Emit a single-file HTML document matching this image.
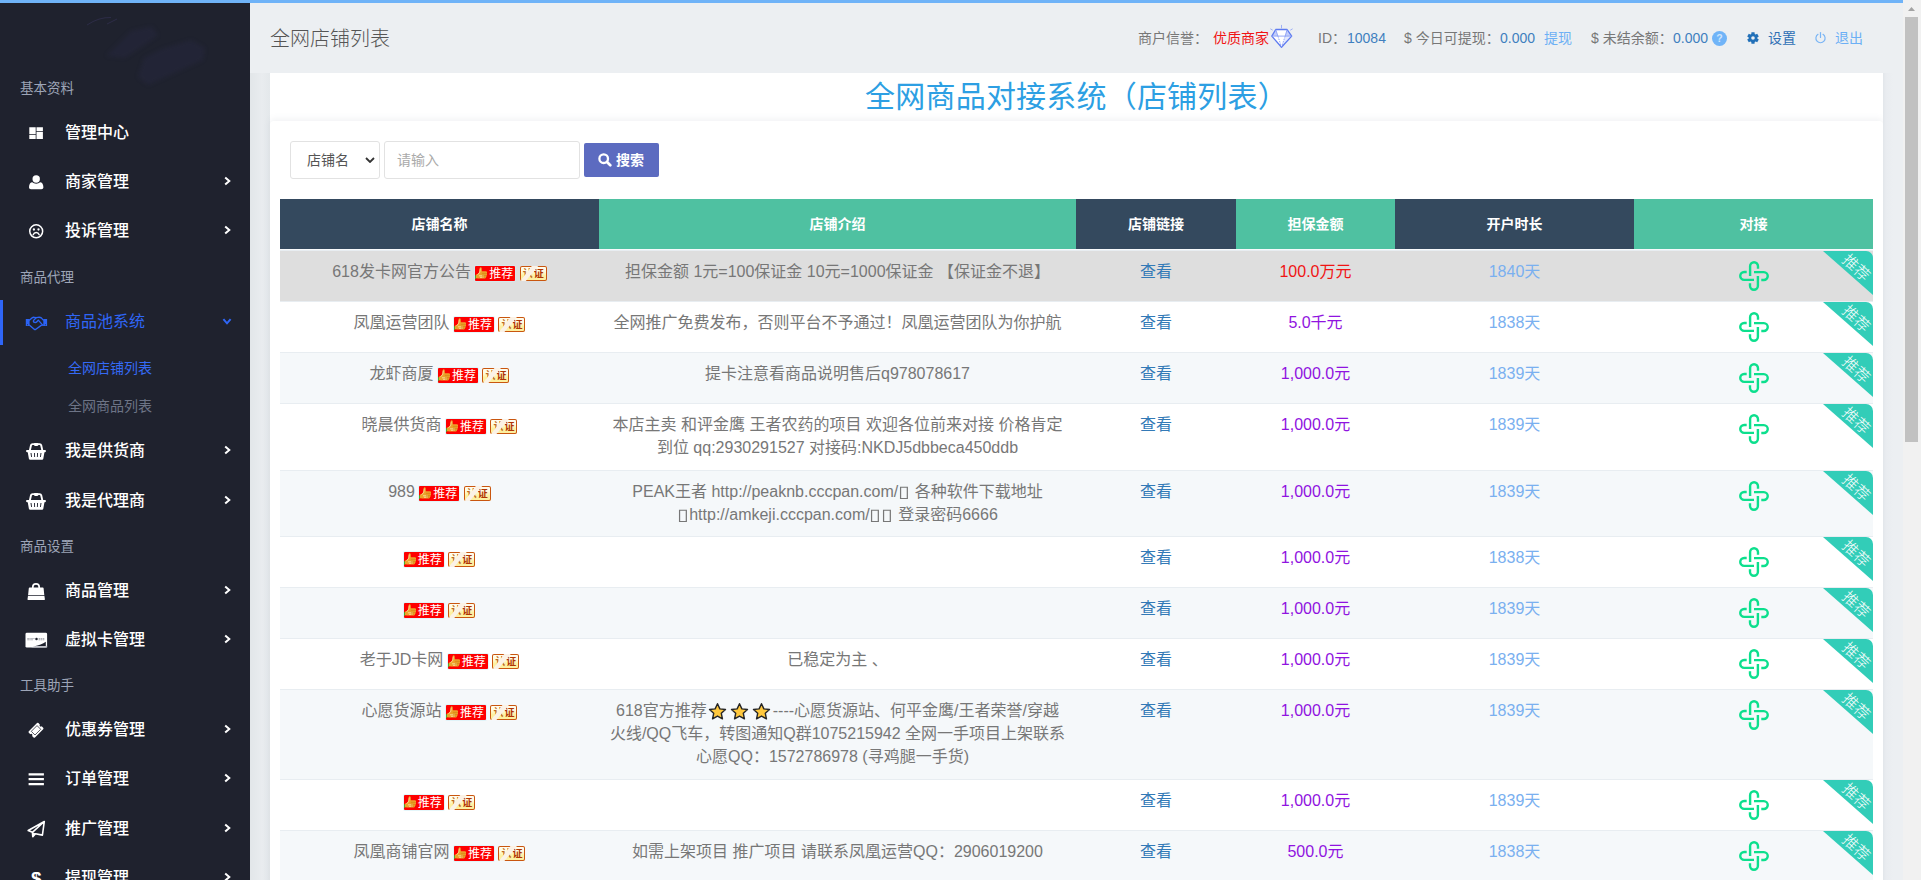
<!DOCTYPE html>
<html lang="zh-CN">
<head>
<meta charset="utf-8">
<title>全网店铺列表</title>
<style>
*{box-sizing:border-box;margin:0;padding:0}
html,body{width:1921px;height:880px;overflow:hidden}
body{font-family:"Liberation Sans","Noto Sans CJK SC",sans-serif;background:#eceff2;color:#666;position:relative;font-size:14px}
a{text-decoration:none;color:inherit}
#topline{position:absolute;left:0;top:0;width:1903px;height:3px;background:#6fb3f8;z-index:10}
#sb{position:absolute;left:1903px;top:0;width:18px;height:880px;background:#f1f1f1;z-index:20}
#sb svg{position:absolute;left:0;top:0;width:18px;height:18px}
#sb b{position:absolute;left:2px;top:17px;width:13px;height:425px;background:#c1c1c1}
/* sidebar */
#side{position:absolute;left:0;top:0;width:250px;height:880px;background:#1f222e;overflow:hidden}
#side .lbl{position:absolute;left:20px;font-size:13.500px;color:#9da5b7;line-height:20px;height:20px}
#side .it{position:absolute;left:0;width:250px;height:46px;color:#fff;font-size:16px;font-weight:500;line-height:46px}
#side .it .tx{position:absolute;left:65px;top:1px}
#side .it svg.ic{position:absolute;left:24px;top:11px;width:24px;height:24px;fill:currentColor;color:#fff}
#side .it svg.ch{position:absolute;left:222px;top:17px;width:10px;height:12px;fill:none;stroke:#fff;stroke-width:2}
#side .it svg.ch.dn{left:221px;top:18px;width:12px;height:10px}
#side .it.act{color:#2f66f6;font-weight:400}
#side .it.act svg.ic{color:#2b63f5}
#side .it.act svg.ch{stroke:#2f66f6}
#side .bar{position:absolute;left:0;top:300px;width:3px;height:45px;background:#2f66f8}
#side .sub{position:absolute;left:68px;font-size:14px;line-height:20px;color:#6d7486}
#side .sub.on{color:#356af5}
#smg{position:absolute;left:0;top:0;width:250px;height:100px}
/* header */
#hd{position:absolute;left:250px;top:3px;width:1653px;height:70px}
#hd h1{position:absolute;left:20px;top:21px;font-size:20px;font-weight:300;color:#555;line-height:30px}
#hd .r{position:absolute;top:25px;font-size:14px;line-height:20px;color:#777;white-space:nowrap}
#hd .b{color:#3f7fbf}
#hd .lb{color:#6cb0f5}
/* cards */
#wrap{position:absolute;left:250px;top:73px;width:1653px;height:807px;overflow:hidden}
#c1{position:absolute;left:20px;top:0;width:1613px;height:52px;background:#fff;}
#wrap:before{content:"";position:absolute;left:0;top:0;width:20px;height:807px;background:linear-gradient(to right,#e2e6e9 0,#e9ecef 60%,#e4e8eb 100%)}
#wrap:after{content:"";position:absolute;left:1633px;top:0;width:20px;height:807px;background:linear-gradient(to right,#e2e6ea 0,#e9ecf0 3px,#eceff2 10px)}
#c1 h2{font-size:30px;font-weight:400;color:#2d9fe3;text-align:center;line-height:48px;letter-spacing:.2px}
#c2{position:absolute;left:20px;top:48px;width:1613px;height:770px;background:#fff;border-radius:4px 4px 0 0;box-shadow:0 -2px 6px rgba(120,130,145,.10)}
#sel{position:absolute;left:20px;top:20px;width:90px;height:38px;border:1px solid #e2e2e2;border-radius:3px;background:#fff;font-size:14px;color:#555;line-height:36px;padding-left:16px}
#inp{position:absolute;left:114px;top:20px;width:196px;height:38px;border:1px solid #e2e2e2;border-radius:3px;background:#fff;font-size:14px;color:#aaa;line-height:36px;padding-left:12px}
#btn{position:absolute;left:314px;top:22px;width:75px;height:34px;border-radius:2px;background:#5c6bc0;color:#fff;font-size:14px;font-weight:700;line-height:34px;padding-left:32px}
/* table */
#tb{position:absolute;left:10px;top:78px;width:1593px;border-collapse:separate;border-spacing:0;table-layout:fixed}
#tb th{height:50px;color:#fff;font-size:14px;font-weight:700;text-align:center;vertical-align:middle;padding-bottom:1px;line-height:20px}
#tb th.d{background:#34495e}
#tb th.g{background:#4fc1a1}
#tb td{text-align:center;vertical-align:top;font-size:16px;line-height:22.860px;color:#777;padding:10px 10px 0;border-top:1px solid #e8edf1;position:relative}
#tb tr.o td{background:#f5f8fa}
#tb tr.h td{background:#dedede}
#tb tr.sp td{height:1px;padding:0;border:0;background:#f8fafc}
.lk{color:#337ab7}
#tb td.red{color:#f01414}
#tb td.pu{color:#9013e0}
#tb td.dy{color:#7ab0f0}

#btn svg{position:absolute;left:14px;top:10px;width:14px;height:14px}
#selarr{position:absolute;left:95px;top:36px;width:10px;height:6px}
.tj{display:inline-block;width:40px;height:15px;background:#fe0000;color:#fff;font-size:12px;line-height:15px;vertical-align:-4px;text-align:left;position:relative;border-radius:1px;overflow:hidden;white-space:nowrap;box-shadow:0 0 0 1px rgba(205,238,245,.55)}
.tj svg{position:absolute;left:0;top:0;width:13px;height:15px}
.rz{display:inline-block;width:27px;height:15px;background:linear-gradient(#fffdf2 0,#fffbe0 35%,#fdf0a0 65%);color:#b03404;font-size:10px;font-weight:700;line-height:15px;vertical-align:-4px;box-shadow:inset 0 0 0 1px #c9560f;border-radius:2px;position:relative;overflow:hidden;white-space:nowrap;text-align:left}
.rz i{position:absolute;left:0;top:0;width:27px;height:15px;background:#fbf2e6;clip-path:polygon(12px 0,18.500px 0,6px 15px,.5px 15px);z-index:1}
.tj em{position:absolute;left:14px;top:1px;font-style:normal;font-size:12px;line-height:15px;font-weight:400}
.rz em{position:absolute;left:3px;top:1px;font-style:normal;line-height:13px;letter-spacing:1px}
.rz b{font-weight:700;color:#c06a20}
.dj{position:absolute;left:105px;top:10px;width:30px;height:30px}
.rib{position:absolute;right:0;top:0;width:50px;height:44px;overflow:hidden;border-top-right-radius:7px}
.rib:before{content:"";position:absolute;left:0;top:0;width:50px;height:44px;background:#32cdb8;clip-path:polygon(0 0,100% 0,100% 100%)}
.rib span{position:absolute;left:12.500px;top:6.500px;width:40px;height:20px;font-size:15.500px;line-height:20px;color:#fff;transform:rotate(43.500deg);transform-origin:50% 50%;white-space:nowrap;font-weight:300;text-align:center}
.st{width:19px;height:19px;vertical-align:-4.500px;margin:0 1.500px}
.tf{display:inline-block;transform:scaleX(1.350);margin:0 1.500px}
</style>
</head>
<body>
<div id="topline"></div>
<div id="sb"><svg viewBox="0 0 18 18"><path d="M5 11l3.500-4 3.500 4z" fill="#a3a3a3"/></svg><b></b></div>
<div id="side">
<svg id="smg" viewBox="0 0 250 100"><defs><filter id="bl" x="-20%" y="-20%" width="140%" height="140%"><feGaussianBlur stdDeviation="2.200"/></filter></defs><g filter="url(#bl)" fill="#2b2a48" opacity=".32"><path d="M131 31l21-4.500 6 9-33 22.500-19-2z"/><path d="M162 49l29-9 14 8-2 12-55 25-10-8 6-19z"/></g><path d="M87 25q12-8 24-7.500M107 24l10-5" stroke="#3a3560" stroke-width="1" fill="none" opacity=".5"/></svg>
<div class="bar"></div>
<div class="lbl" style="top:79px">基本资料</div>
<div class="it" style="top:109px"><svg class="ic" viewBox="0 0 24 24"><path d="M5.300 7.200h6.400V14H5.300zM5.300 14.800h6.400v4.300H5.300zM12.500 7.200h6.400v3.700h-6.400zM12.500 11.700h6.400v7.400h-6.400z"/></svg><span class="tx">管理中心</span></div>
<div class="it" style="top:158px"><svg class="ic" viewBox="0 0 24 24"><circle cx="12.200" cy="10" r="3.700"/><path d="M5 18.300c0-3.200 1.500-4.900 3.300-5 1 .9 2.300 1.400 3.900 1.400s2.900-.5 3.900-1.400c1.800.1 3.300 1.800 3.300 5 0 1.200-.8 2-2 2H7c-1.200 0-2-.8-2-2z"/></svg><span class="tx">商家管理</span><svg class="ch" viewBox="0 0 10 12"><path d="M3.200 2.400L7.300 6 3.200 9.600"/></svg></div>
<div class="it" style="top:207px"><svg class="ic" viewBox="0 0 24 24"><circle cx="12.200" cy="13.300" r="6.450" fill="none" stroke="currentColor" stroke-width="1.500"/><circle cx="9.900" cy="11.500" r="1.150"/><circle cx="14.500" cy="11.500" r="1.150"/><path d="M9.200 16.800c.5-1.500 1.600-2.300 3-2.300s2.500.8 3 2.300" fill="none" stroke="currentColor" stroke-width="1.400" stroke-linecap="round"/></svg><span class="tx">投诉管理</span><svg class="ch" viewBox="0 0 10 12"><path d="M3.200 2.400L7.300 6 3.200 9.600"/></svg></div>
<div class="lbl" style="top:268px">商品代理</div>
<div class="it act" style="top:298px"><svg class="ic" viewBox="0 0 24 24"><path d="M1.800 10h3.800v7H1.800zM19.300 10h3.800v7h-3.800z"/><g fill="none" stroke="currentColor" stroke-width="1.350" stroke-linejoin="round" stroke-linecap="round"><path d="M5.600 11.100L8 8.900q1-.7 2.200-.6l1.900.4 2-.4q2-.3 3.200.6l2 2.200"/><path d="M5.600 16.200l4.600 4q.8.700 1.700 0l5.300-3.800 2.100-.2"/><path d="M12.100 8.700l-2.500 2.700q-.7 1.500 1 2 1.400.3 2.300-.7l1.400-1.600 4 4.500"/></g><circle cx="3.500" cy="15.700" r=".5" fill="#1f222e"/><circle cx="21.400" cy="15.700" r=".5" fill="#1f222e"/></svg><span class="tx">商品池系统</span><svg class="ch dn" viewBox="0 0 12 10"><path d="M2.400 3.200L6 7.300 9.600 3.200"/></svg></div>
<div class="sub on" style="top:358px">全网店铺列表</div>
<div class="sub" style="top:396px">全网商品列表</div>
<div class="it" style="top:427px"><svg class="ic" viewBox="0 0 24 24"><path d="M5.900 12.300L7 7.200q.3-1.100 1.500-1.100h7.200q1.200 0 1.500 1.100l1.100 5.100" fill="none" stroke="currentColor" stroke-width="1.900"/><rect x="9.800" y="5" width="4.700" height="2.900" rx="1.300"/><rect x="2" y="11.900" width="20" height="2.300" rx="1.100"/><path d="M3.700 14h16.800l-1.200 6.700q-.2 1-1.200 1H6.100q-1 0-1.200-1zM6.500 14.900l.6 4h.9l-.5-4zM10 14.900l.2 4h.9l-.2-4zM13.100 14.900l-.2 4h.9l.2-4zM16.500 14.900l-.5 4h.9l.6-4z" fill-rule="evenodd"/></svg><span class="tx">我是供货商</span><svg class="ch" viewBox="0 0 10 12"><path d="M3.200 2.400L7.300 6 3.200 9.600"/></svg></div>
<div class="it" style="top:477px"><svg class="ic" viewBox="0 0 24 24"><path d="M5.900 12.300L7 7.200q.3-1.100 1.500-1.100h7.200q1.200 0 1.500 1.100l1.100 5.100" fill="none" stroke="currentColor" stroke-width="1.900"/><rect x="9.800" y="5" width="4.700" height="2.900" rx="1.300"/><rect x="2" y="11.900" width="20" height="2.300" rx="1.100"/><path d="M3.700 14h16.800l-1.200 6.700q-.2 1-1.200 1H6.100q-1 0-1.200-1zM6.500 14.900l.6 4h.9l-.5-4zM10 14.900l.2 4h.9l-.2-4zM13.100 14.900l-.2 4h.9l.2-4zM16.500 14.900l-.5 4h.9l.6-4z" fill-rule="evenodd"/></svg><span class="tx">我是代理商</span><svg class="ch" viewBox="0 0 10 12"><path d="M3.200 2.400L7.300 6 3.200 9.600"/></svg></div>
<div class="lbl" style="top:537px">商品设置</div>
<div class="it" style="top:567px"><svg class="ic" viewBox="0 0 24 24"><path d="M8.800 11.500V9a3.200 3.200 0 0 1 6.400 0v2.500" fill="none" stroke="currentColor" stroke-width="1.700"/><path d="M5.600 9.500h13.200q.7 0 .8.700l.7 6.700H4.100l.7-6.700q.1-.7.800-.7zM4 17.800h16.400l.5 3.500q.1.700-.6.700H4.100q-.7 0-.6-.7z"/></svg><span class="tx">商品管理</span><svg class="ch" viewBox="0 0 10 12"><path d="M3.200 2.400L7.300 6 3.200 9.600"/></svg></div>
<div class="it" style="top:616px"><svg class="ic" viewBox="0 0 24 24"><rect x="1.500" y="5.700" width="21.600" height="14.900" rx="1.400"/><path d="M7 20.600h16.100v-1.800H12z" fill="#c4c6cd"/><path d="M10 19.500c5-1 8.800-2.600 11.800-4.700v4.100H12z" fill="#1f222e"/><path d="M3.300 11.600h1.600M5.400 11.600h1.300M7.200 11.600h1.600M9.300 11.600h1.300M14.600 11.600h1.500M16.600 11.600h1.500M18.600 11.600h1.700M3.300 12.800h1.600M5.400 12.800h1.300M7.200 12.800h1.600M14.600 12.800h1.500M16.600 12.800h1.500M18.600 12.800h1.700" stroke="#8d8f98" stroke-width=".8" fill="none"/><circle cx="12.500" cy="12.100" r="1.250" fill="#1f222e"/></svg><span class="tx">虚拟卡管理</span><svg class="ch" viewBox="0 0 10 12"><path d="M3.200 2.400L7.300 6 3.200 9.600"/></svg></div>
<div class="lbl" style="top:676px">工具助手</div>
<div class="it" style="top:706px"><svg class="ic" viewBox="0 0 24 24"><g transform="translate(12 13.300) rotate(-45)"><path d="M-6.800-3.350a1 1 0 0 1 1-1H5.800a1 1 0 0 1 1 1V-1.200a1.200 1.200 0 0 0 0 2.400V3.350a1 1 0 0 1-1 1H-5.800a1 1 0 0 1-1-1V1.200a1.200 1.200 0 0 0 0-2.400z"/><rect x="-4.050" y="-2.600" width="8.100" height="5.200" fill="none" stroke="#1f222e" stroke-width=".7"/></g></svg><span class="tx">优惠券管理</span><svg class="ch" viewBox="0 0 10 12"><path d="M3.200 2.400L7.300 6 3.200 9.600"/></svg></div>
<div class="it" style="top:755px"><svg class="ic" viewBox="0 0 24 24"><path d="M4.600 7.200h15.300v2.200H4.600zM4.600 12h15.300v2.200H4.600zM4.600 16.900h15.300v2.300H4.600z"/></svg><span class="tx">订单管理</span><svg class="ch" viewBox="0 0 10 12"><path d="M3.200 2.400L7.300 6 3.200 9.600"/></svg></div>
<div class="it" style="top:805px"><svg class="ic" viewBox="0 0 24 24"><path d="M20.300 5.500L4.200 14.500l4.200 1.800.4 4.400 2.700-3 6.900 1.400zM20.300 5.500L8.400 16.300" fill="none" stroke="currentColor" stroke-width="1.600" stroke-linejoin="round"/><path d="M8.400 16.300l.4 4.400 2.900-3.200z"/></svg><span class="tx">推广管理</span><svg class="ch" viewBox="0 0 10 12"><path d="M3.200 2.400L7.300 6 3.200 9.600"/></svg></div>
<div class="it" style="top:854px"><svg class="ic" viewBox="0 0 24 24"><text x="12.200" y="19.500" font-size="19" font-weight="700" text-anchor="middle" font-family="Liberation Sans,sans-serif">$</text></svg><span class="tx">提现管理</span><svg class="ch" viewBox="0 0 10 12"><path d="M3.200 2.400L7.300 6 3.200 9.600"/></svg></div>
</div>
<div id="hd"><h1>全网店铺列表</h1>
<span class="r" style="left:888px">商户信誉：</span>
<span class="r" style="left:963px;color:#f01414">优质商家</span>
<svg style="position:absolute;left:1020px;top:21px;width:23px;height:24px" viewBox="0 0 23 24" fill="none" stroke="#5d7af0" stroke-linejoin="round"><path d="M11.500 1.300v2.600M.7 5l1.700 1M22.300 5l-1.700 1" stroke="#9fb0f6" stroke-width="1" stroke-linecap="round"/><path d="M5.700 5.500h11.400l4.600 6.600L11.500 23.200 1.800 12.100z" fill="#fff" stroke="none"/><path d="M1.800 12.100l3.900-6.600 2.200 6.600zM21.700 12.100l-4.600-6.600-1.900 6.600z" fill="#c3cefa" stroke="none"/><path d="M15.200 12.100h6.500L11.500 23.200z" fill="#e4e9fd" stroke="none"/><path d="M5.700 5.500h11.400l4.600 6.600L11.500 23.200 1.800 12.100z" stroke-width="1.300"/><path d="M1.800 12.100h19.900M5.700 5.500l2.200 6.600M17.100 5.500l-1.900 6.600" stroke-width=".9" stroke="#8a9ff5"/><path d="M7.900 12.100l3.600 11M15.200 12.100l-3.700 11" stroke-width=".9" stroke="#8a9ff5" stroke-dasharray="1.600 1"/></svg>
<span class="r" style="left:1068px">ID：</span>
<span class="r b" style="left:1097px">10084</span>
<span class="r" style="left:1154px">$ 今日可提现：</span>
<span class="r b" style="left:1250px">0.000</span>
<span class="r lb" style="left:1294px">提现</span>
<span class="r" style="left:1341px">$ 未结余额：</span>
<span class="r b" style="left:1423px">0.000</span>
<svg style="position:absolute;left:1462px;top:28px;width:15px;height:15px" viewBox="0 0 15 15"><circle cx="7.500" cy="7.500" r="7.500" fill="#70b4f8"/><text x="7.500" y="11.300" font-size="10.500" font-weight="700" text-anchor="middle" fill="#cfe5fc" font-family="Liberation Sans,sans-serif">?</text></svg>
<svg style="position:absolute;left:1497px;top:29px;width:12px;height:12px" viewBox="0 0 12 12"><path fill="#2270b8" fill-rule="evenodd" d="M4.29 2.05 L4.45 0.20 L7.55 0.20 L7.71 2.05 L8.56 2.55 L10.24 1.76 L11.80 4.45 L10.27 5.51 L10.27 6.49 L11.80 7.55 L10.24 10.24 L8.56 9.45 L7.71 9.95 L7.55 11.80 L4.45 11.80 L4.29 9.95 L3.44 9.45 L1.76 10.24 L0.20 7.55 L1.73 6.49 L1.73 5.51 L0.20 4.45 L1.76 1.76 L3.44 2.55Z M6 4.200a1.800 1.800 0 1 0 0 3.600a1.800 1.800 0 1 0 0-3.600z"/></svg>
<span class="r" style="left:1518px;color:#2f6fb5">设置</span>
<svg style="position:absolute;left:1564px;top:28px;width:13px;height:14px" viewBox="0 0 13 14" fill="none" stroke="#7ab5f5" stroke-width="1.200" stroke-linecap="round"><path d="M6.500 1.500v5"/><path d="M4 3.300a4.600 4.600 0 1 0 5 0"/></svg>
<span class="r lb" style="left:1585px">退出</span>
</div>
<div id="wrap">
<div id="c1"><h2>全网商品对接系统（店铺列表）</h2></div>
<div id="c2">
<div id="sel">店铺名</div>
<div id="inp">请输入</div>
<div id="btn"><svg viewBox="0 0 14 14"><circle cx="5.700" cy="5.700" r="4.300" fill="none" stroke="#fff" stroke-width="2.300"/><path d="M9 9l3.300 3.300" stroke="#fff" stroke-width="2.700" stroke-linecap="round"/></svg>搜索</div>
<svg id="selarr" viewBox="0 0 10 6"><path d="M1 1l4 4 4-4" fill="none" stroke="#333" stroke-width="1.800"/></svg>
<table id="tb"><colgroup><col style="width:319px"><col style="width:477px"><col style="width:160px"><col style="width:159px"><col style="width:239px"><col style="width:239px"></colgroup>
<tr><th class="d">店铺名称</th><th class="g">店铺介绍</th><th class="d">店铺链接</th><th class="g">担保金额</th><th class="d">开户时长</th><th class="g">对接</th></tr>
<tr class="sp"><td colspan="6"></td></tr>
<tr class="h" style="height:51px"><td>618发卡网官方公告 <span class="tj"><svg viewBox="0 0 13 15"><path d="M0 9.200h1.100v3.600H0z" fill="#46b02a"/><path d="M1 8.600c1.500-.2 2.500-1 3.200-2.500l.5-3.800c.1-1.200 1.800-1.300 2-.1l.2 3.100h3.900c1.400 0 1.600 1.500.8 2 .7.500.6 1.700-.2 2 .5.600.2 1.600-.5 1.800.3.700-.2 1.500-1.100 1.500H4.500c-1.200 0-2-.4-3.500-.4z" fill="#eda22a"/><path d="M5.300 2.600l-.5 3.600c-.4 1-1.200 1.800-2.300 2.300M4 9.800h5M5 11.300h4" fill="none" stroke="#fbe6a8" stroke-width=".8"/><path d="M6.900 7.300h4.300M7 9.300h4M7 11.100h3.500" fill="none" stroke="#c9780c" stroke-width=".6"/></svg><em>推荐</em></span> <span class="rz"><i></i><em><b>认</b>证</em></span></td><td>担保金额 1元=100保证金 10元=1000保证金 【保证金不退】</td><td><a class="lk">查看</a></td><td class="red">100.0万元</td><td class="dy">1840天</td><td><svg class="dj" viewBox="0 0 30 30"><g fill="none" stroke="#0cdf8d" stroke-width="2.400"><path d="M11.100 15V5.200a3.950 3.950 0 0 1 7.900 0v2.500"/><path d="M15 11.100h9.800a3.950 3.950 0 0 1 0 7.900h-2.500"/><path d="M18.900 15v9.800a3.950 3.950 0 0 1-7.900 0v-2.500"/><path d="M15 18.900H5.200a3.950 3.950 0 0 1 0-7.900h2.500"/></g></svg><div class="rib"><span>推荐</span></div></td></tr>
<tr class="" style="height:51px"><td>凤凰运营团队 <span class="tj"><svg viewBox="0 0 13 15"><path d="M0 9.200h1.100v3.600H0z" fill="#46b02a"/><path d="M1 8.600c1.500-.2 2.500-1 3.200-2.500l.5-3.800c.1-1.200 1.800-1.300 2-.1l.2 3.100h3.900c1.400 0 1.600 1.500.8 2 .7.500.6 1.700-.2 2 .5.600.2 1.600-.5 1.800.3.700-.2 1.500-1.100 1.500H4.500c-1.200 0-2-.4-3.500-.4z" fill="#eda22a"/><path d="M5.300 2.600l-.5 3.600c-.4 1-1.200 1.800-2.300 2.300M4 9.800h5M5 11.300h4" fill="none" stroke="#fbe6a8" stroke-width=".8"/><path d="M6.900 7.300h4.300M7 9.300h4M7 11.100h3.500" fill="none" stroke="#c9780c" stroke-width=".6"/></svg><em>推荐</em></span> <span class="rz"><i></i><em><b>认</b>证</em></span></td><td>全网推广免费发布，否则平台不予通过！凤凰运营团队为你护航</td><td><a class="lk">查看</a></td><td class="pu">5.0千元</td><td class="dy">1838天</td><td><svg class="dj" viewBox="0 0 30 30"><g fill="none" stroke="#0cdf8d" stroke-width="2.400"><path d="M11.100 15V5.200a3.950 3.950 0 0 1 7.900 0v2.500"/><path d="M15 11.100h9.800a3.950 3.950 0 0 1 0 7.900h-2.500"/><path d="M18.900 15v9.800a3.950 3.950 0 0 1-7.900 0v-2.500"/><path d="M15 18.900H5.200a3.950 3.950 0 0 1 0-7.900h2.500"/></g></svg><div class="rib"><span>推荐</span></div></td></tr>
<tr class="o" style="height:51px"><td>龙虾商厦 <span class="tj"><svg viewBox="0 0 13 15"><path d="M0 9.200h1.100v3.600H0z" fill="#46b02a"/><path d="M1 8.600c1.500-.2 2.500-1 3.200-2.500l.5-3.800c.1-1.200 1.800-1.300 2-.1l.2 3.100h3.900c1.400 0 1.600 1.500.8 2 .7.500.6 1.700-.2 2 .5.600.2 1.600-.5 1.800.3.700-.2 1.500-1.100 1.500H4.500c-1.200 0-2-.4-3.500-.4z" fill="#eda22a"/><path d="M5.300 2.600l-.5 3.600c-.4 1-1.200 1.800-2.300 2.300M4 9.800h5M5 11.300h4" fill="none" stroke="#fbe6a8" stroke-width=".8"/><path d="M6.900 7.300h4.300M7 9.300h4M7 11.100h3.500" fill="none" stroke="#c9780c" stroke-width=".6"/></svg><em>推荐</em></span> <span class="rz"><i></i><em><b>认</b>证</em></span></td><td>提卡注意看商品说明售后q978078617</td><td><a class="lk">查看</a></td><td class="pu">1,000.0元</td><td class="dy">1839天</td><td><svg class="dj" viewBox="0 0 30 30"><g fill="none" stroke="#0cdf8d" stroke-width="2.400"><path d="M11.100 15V5.200a3.950 3.950 0 0 1 7.900 0v2.500"/><path d="M15 11.100h9.800a3.950 3.950 0 0 1 0 7.900h-2.500"/><path d="M18.900 15v9.800a3.950 3.950 0 0 1-7.900 0v-2.500"/><path d="M15 18.900H5.200a3.950 3.950 0 0 1 0-7.900h2.500"/></g></svg><div class="rib"><span>推荐</span></div></td></tr>
<tr class="" style="height:67px"><td>晓晨供货商 <span class="tj"><svg viewBox="0 0 13 15"><path d="M0 9.200h1.100v3.600H0z" fill="#46b02a"/><path d="M1 8.600c1.500-.2 2.500-1 3.200-2.500l.5-3.800c.1-1.200 1.800-1.300 2-.1l.2 3.100h3.900c1.400 0 1.600 1.500.8 2 .7.500.6 1.700-.2 2 .5.600.2 1.600-.5 1.800.3.700-.2 1.500-1.100 1.500H4.500c-1.200 0-2-.4-3.500-.4z" fill="#eda22a"/><path d="M5.300 2.600l-.5 3.600c-.4 1-1.200 1.800-2.300 2.300M4 9.800h5M5 11.300h4" fill="none" stroke="#fbe6a8" stroke-width=".8"/><path d="M6.900 7.300h4.300M7 9.300h4M7 11.100h3.500" fill="none" stroke="#c9780c" stroke-width=".6"/></svg><em>推荐</em></span> <span class="rz"><i></i><em><b>认</b>证</em></span></td><td>本店主卖 和评金鹰 王者农药的项目 欢迎各位前来对接 价格肯定<br>到位 qq:2930291527 对接码:NKDJ5dbbeca450ddb</td><td><a class="lk">查看</a></td><td class="pu">1,000.0元</td><td class="dy">1839天</td><td><svg class="dj" viewBox="0 0 30 30"><g fill="none" stroke="#0cdf8d" stroke-width="2.400"><path d="M11.100 15V5.200a3.950 3.950 0 0 1 7.900 0v2.500"/><path d="M15 11.100h9.800a3.950 3.950 0 0 1 0 7.900h-2.500"/><path d="M18.900 15v9.800a3.950 3.950 0 0 1-7.900 0v-2.500"/><path d="M15 18.900H5.200a3.950 3.950 0 0 1 0-7.900h2.500"/></g></svg><div class="rib"><span>推荐</span></div></td></tr>
<tr class="o" style="height:66px"><td>989 <span class="tj"><svg viewBox="0 0 13 15"><path d="M0 9.200h1.100v3.600H0z" fill="#46b02a"/><path d="M1 8.600c1.500-.2 2.500-1 3.200-2.500l.5-3.800c.1-1.200 1.800-1.300 2-.1l.2 3.100h3.900c1.400 0 1.600 1.500.8 2 .7.500.6 1.700-.2 2 .5.600.2 1.600-.5 1.800.3.700-.2 1.500-1.100 1.500H4.500c-1.200 0-2-.4-3.500-.4z" fill="#eda22a"/><path d="M5.300 2.600l-.5 3.600c-.4 1-1.200 1.800-2.300 2.300M4 9.800h5M5 11.300h4" fill="none" stroke="#fbe6a8" stroke-width=".8"/><path d="M6.900 7.300h4.300M7 9.300h4M7 11.100h3.500" fill="none" stroke="#c9780c" stroke-width=".6"/></svg><em>推荐</em></span> <span class="rz"><i></i><em><b>认</b>证</em></span></td><td>PEAK王者 http://peaknb.cccpan.com/<span class="tf">▯</span> 各种软件下载地址<br><span class="tf">▯</span>http://amkeji.cccpan.com/<span class="tf">▯</span><span class="tf">▯</span> 登录密码6666</td><td><a class="lk">查看</a></td><td class="pu">1,000.0元</td><td class="dy">1839天</td><td><svg class="dj" viewBox="0 0 30 30"><g fill="none" stroke="#0cdf8d" stroke-width="2.400"><path d="M11.100 15V5.200a3.950 3.950 0 0 1 7.900 0v2.500"/><path d="M15 11.100h9.800a3.950 3.950 0 0 1 0 7.900h-2.500"/><path d="M18.900 15v9.800a3.950 3.950 0 0 1-7.900 0v-2.500"/><path d="M15 18.900H5.200a3.950 3.950 0 0 1 0-7.900h2.500"/></g></svg><div class="rib"><span>推荐</span></div></td></tr>
<tr class="" style="height:51px"><td><span class="tj"><svg viewBox="0 0 13 15"><path d="M0 9.200h1.100v3.600H0z" fill="#46b02a"/><path d="M1 8.600c1.500-.2 2.500-1 3.200-2.500l.5-3.800c.1-1.200 1.800-1.300 2-.1l.2 3.100h3.900c1.400 0 1.600 1.500.8 2 .7.500.6 1.700-.2 2 .5.600.2 1.600-.5 1.800.3.700-.2 1.500-1.100 1.500H4.500c-1.200 0-2-.4-3.500-.4z" fill="#eda22a"/><path d="M5.300 2.600l-.5 3.600c-.4 1-1.200 1.800-2.300 2.300M4 9.800h5M5 11.300h4" fill="none" stroke="#fbe6a8" stroke-width=".8"/><path d="M6.900 7.300h4.300M7 9.300h4M7 11.100h3.500" fill="none" stroke="#c9780c" stroke-width=".6"/></svg><em>推荐</em></span> <span class="rz"><i></i><em><b>认</b>证</em></span></td><td></td><td><a class="lk">查看</a></td><td class="pu">1,000.0元</td><td class="dy">1838天</td><td><svg class="dj" viewBox="0 0 30 30"><g fill="none" stroke="#0cdf8d" stroke-width="2.400"><path d="M11.100 15V5.200a3.950 3.950 0 0 1 7.900 0v2.500"/><path d="M15 11.100h9.800a3.950 3.950 0 0 1 0 7.900h-2.500"/><path d="M18.900 15v9.800a3.950 3.950 0 0 1-7.900 0v-2.500"/><path d="M15 18.900H5.200a3.950 3.950 0 0 1 0-7.900h2.500"/></g></svg><div class="rib"><span>推荐</span></div></td></tr>
<tr class="o" style="height:51px"><td><span class="tj"><svg viewBox="0 0 13 15"><path d="M0 9.200h1.100v3.600H0z" fill="#46b02a"/><path d="M1 8.600c1.500-.2 2.500-1 3.200-2.500l.5-3.800c.1-1.200 1.800-1.300 2-.1l.2 3.100h3.900c1.400 0 1.600 1.500.8 2 .7.500.6 1.700-.2 2 .5.600.2 1.600-.5 1.800.3.700-.2 1.500-1.100 1.500H4.500c-1.200 0-2-.4-3.500-.4z" fill="#eda22a"/><path d="M5.300 2.600l-.5 3.600c-.4 1-1.200 1.800-2.300 2.300M4 9.800h5M5 11.300h4" fill="none" stroke="#fbe6a8" stroke-width=".8"/><path d="M6.900 7.300h4.300M7 9.300h4M7 11.100h3.500" fill="none" stroke="#c9780c" stroke-width=".6"/></svg><em>推荐</em></span> <span class="rz"><i></i><em><b>认</b>证</em></span></td><td></td><td><a class="lk">查看</a></td><td class="pu">1,000.0元</td><td class="dy">1839天</td><td><svg class="dj" viewBox="0 0 30 30"><g fill="none" stroke="#0cdf8d" stroke-width="2.400"><path d="M11.100 15V5.200a3.950 3.950 0 0 1 7.900 0v2.500"/><path d="M15 11.100h9.800a3.950 3.950 0 0 1 0 7.900h-2.500"/><path d="M18.900 15v9.800a3.950 3.950 0 0 1-7.900 0v-2.500"/><path d="M15 18.900H5.200a3.950 3.950 0 0 1 0-7.900h2.500"/></g></svg><div class="rib"><span>推荐</span></div></td></tr>
<tr class="" style="height:51px"><td>老于JD卡网 <span class="tj"><svg viewBox="0 0 13 15"><path d="M0 9.200h1.100v3.600H0z" fill="#46b02a"/><path d="M1 8.600c1.500-.2 2.500-1 3.200-2.500l.5-3.800c.1-1.200 1.800-1.300 2-.1l.2 3.100h3.900c1.400 0 1.600 1.500.8 2 .7.500.6 1.700-.2 2 .5.600.2 1.600-.5 1.800.3.700-.2 1.500-1.100 1.500H4.500c-1.200 0-2-.4-3.500-.4z" fill="#eda22a"/><path d="M5.300 2.600l-.5 3.600c-.4 1-1.200 1.800-2.300 2.300M4 9.800h5M5 11.300h4" fill="none" stroke="#fbe6a8" stroke-width=".8"/><path d="M6.900 7.300h4.300M7 9.300h4M7 11.100h3.500" fill="none" stroke="#c9780c" stroke-width=".6"/></svg><em>推荐</em></span> <span class="rz"><i></i><em><b>认</b>证</em></span></td><td>已稳定为主 、</td><td><a class="lk">查看</a></td><td class="pu">1,000.0元</td><td class="dy">1839天</td><td><svg class="dj" viewBox="0 0 30 30"><g fill="none" stroke="#0cdf8d" stroke-width="2.400"><path d="M11.100 15V5.200a3.950 3.950 0 0 1 7.900 0v2.500"/><path d="M15 11.100h9.800a3.950 3.950 0 0 1 0 7.900h-2.500"/><path d="M18.900 15v9.800a3.950 3.950 0 0 1-7.900 0v-2.500"/><path d="M15 18.900H5.200a3.950 3.950 0 0 1 0-7.900h2.500"/></g></svg><div class="rib"><span>推荐</span></div></td></tr>
<tr class="o" style="height:90px"><td>心愿货源站 <span class="tj"><svg viewBox="0 0 13 15"><path d="M0 9.200h1.100v3.600H0z" fill="#46b02a"/><path d="M1 8.600c1.500-.2 2.500-1 3.200-2.500l.5-3.800c.1-1.200 1.800-1.300 2-.1l.2 3.100h3.900c1.400 0 1.600 1.500.8 2 .7.500.6 1.700-.2 2 .5.600.2 1.600-.5 1.800.3.700-.2 1.500-1.100 1.500H4.500c-1.200 0-2-.4-3.500-.4z" fill="#eda22a"/><path d="M5.300 2.600l-.5 3.600c-.4 1-1.200 1.800-2.300 2.300M4 9.800h5M5 11.300h4" fill="none" stroke="#fbe6a8" stroke-width=".8"/><path d="M6.900 7.300h4.300M7 9.300h4M7 11.100h3.500" fill="none" stroke="#c9780c" stroke-width=".6"/></svg><em>推荐</em></span> <span class="rz"><i></i><em><b>认</b>证</em></span></td><td>618官方推荐<svg class="st" viewBox="0 0 20 20"><path d="M10 1.800l2.500 5.400 5.900.7-4.400 4 1.200 5.800L10 14.800l-5.200 2.900L6 11.900l-4.400-4 5.900-.7z" fill="#ffc83d" stroke="#262626" stroke-width="1.500" stroke-linejoin="round"/></svg><svg class="st" viewBox="0 0 20 20"><path d="M10 1.800l2.500 5.400 5.900.7-4.400 4 1.200 5.800L10 14.800l-5.200 2.900L6 11.900l-4.400-4 5.900-.7z" fill="#ffc83d" stroke="#262626" stroke-width="1.500" stroke-linejoin="round"/></svg><svg class="st" viewBox="0 0 20 20"><path d="M10 1.800l2.500 5.400 5.900.7-4.400 4 1.200 5.800L10 14.800l-5.200 2.900L6 11.900l-4.400-4 5.900-.7z" fill="#ffc83d" stroke="#262626" stroke-width="1.500" stroke-linejoin="round"/></svg>----心愿货源站、何平金鹰/王者荣誉/穿越<br>火线/QQ飞车，转图通知Q群1075215942 全网一手项目上架联系<br><span style="margin-right:10px">心愿QQ：1572786978 (寻鸡腿一手货)</span></td><td><a class="lk">查看</a></td><td class="pu">1,000.0元</td><td class="dy">1839天</td><td><svg class="dj" viewBox="0 0 30 30"><g fill="none" stroke="#0cdf8d" stroke-width="2.400"><path d="M11.100 15V5.200a3.950 3.950 0 0 1 7.900 0v2.500"/><path d="M15 11.100h9.800a3.950 3.950 0 0 1 0 7.900h-2.500"/><path d="M18.900 15v9.800a3.950 3.950 0 0 1-7.900 0v-2.500"/><path d="M15 18.900H5.200a3.950 3.950 0 0 1 0-7.900h2.500"/></g></svg><div class="rib"><span>推荐</span></div></td></tr>
<tr class="" style="height:51px"><td><span class="tj"><svg viewBox="0 0 13 15"><path d="M0 9.200h1.100v3.600H0z" fill="#46b02a"/><path d="M1 8.600c1.500-.2 2.500-1 3.200-2.500l.5-3.800c.1-1.200 1.800-1.300 2-.1l.2 3.100h3.900c1.400 0 1.600 1.500.8 2 .7.500.6 1.700-.2 2 .5.600.2 1.600-.5 1.800.3.700-.2 1.500-1.100 1.500H4.500c-1.200 0-2-.4-3.500-.4z" fill="#eda22a"/><path d="M5.300 2.600l-.5 3.600c-.4 1-1.200 1.800-2.300 2.300M4 9.800h5M5 11.300h4" fill="none" stroke="#fbe6a8" stroke-width=".8"/><path d="M6.900 7.300h4.300M7 9.300h4M7 11.100h3.500" fill="none" stroke="#c9780c" stroke-width=".6"/></svg><em>推荐</em></span> <span class="rz"><i></i><em><b>认</b>证</em></span></td><td></td><td><a class="lk">查看</a></td><td class="pu">1,000.0元</td><td class="dy">1839天</td><td><svg class="dj" viewBox="0 0 30 30"><g fill="none" stroke="#0cdf8d" stroke-width="2.400"><path d="M11.100 15V5.200a3.950 3.950 0 0 1 7.900 0v2.500"/><path d="M15 11.100h9.800a3.950 3.950 0 0 1 0 7.900h-2.500"/><path d="M18.900 15v9.800a3.950 3.950 0 0 1-7.900 0v-2.500"/><path d="M15 18.900H5.200a3.950 3.950 0 0 1 0-7.900h2.500"/></g></svg><div class="rib"><span>推荐</span></div></td></tr>
<tr class="o" style="height:51px"><td>凤凰商铺官网 <span class="tj"><svg viewBox="0 0 13 15"><path d="M0 9.200h1.100v3.600H0z" fill="#46b02a"/><path d="M1 8.600c1.500-.2 2.500-1 3.200-2.500l.5-3.800c.1-1.200 1.800-1.300 2-.1l.2 3.100h3.900c1.400 0 1.600 1.500.8 2 .7.500.6 1.700-.2 2 .5.600.2 1.600-.5 1.800.3.700-.2 1.500-1.100 1.500H4.500c-1.200 0-2-.4-3.500-.4z" fill="#eda22a"/><path d="M5.300 2.600l-.5 3.600c-.4 1-1.200 1.800-2.300 2.300M4 9.800h5M5 11.300h4" fill="none" stroke="#fbe6a8" stroke-width=".8"/><path d="M6.900 7.300h4.300M7 9.300h4M7 11.100h3.500" fill="none" stroke="#c9780c" stroke-width=".6"/></svg><em>推荐</em></span> <span class="rz"><i></i><em><b>认</b>证</em></span></td><td>如需上架项目 推广项目 请联系凤凰运营QQ：2906019200</td><td><a class="lk">查看</a></td><td class="pu">500.0元</td><td class="dy">1838天</td><td><svg class="dj" viewBox="0 0 30 30"><g fill="none" stroke="#0cdf8d" stroke-width="2.400"><path d="M11.100 15V5.200a3.950 3.950 0 0 1 7.900 0v2.500"/><path d="M15 11.100h9.800a3.950 3.950 0 0 1 0 7.900h-2.500"/><path d="M18.900 15v9.800a3.950 3.950 0 0 1-7.900 0v-2.500"/><path d="M15 18.900H5.200a3.950 3.950 0 0 1 0-7.900h2.500"/></g></svg><div class="rib"><span>推荐</span></div></td></tr>
</table>
</div>
</div>
</body>
</html>
